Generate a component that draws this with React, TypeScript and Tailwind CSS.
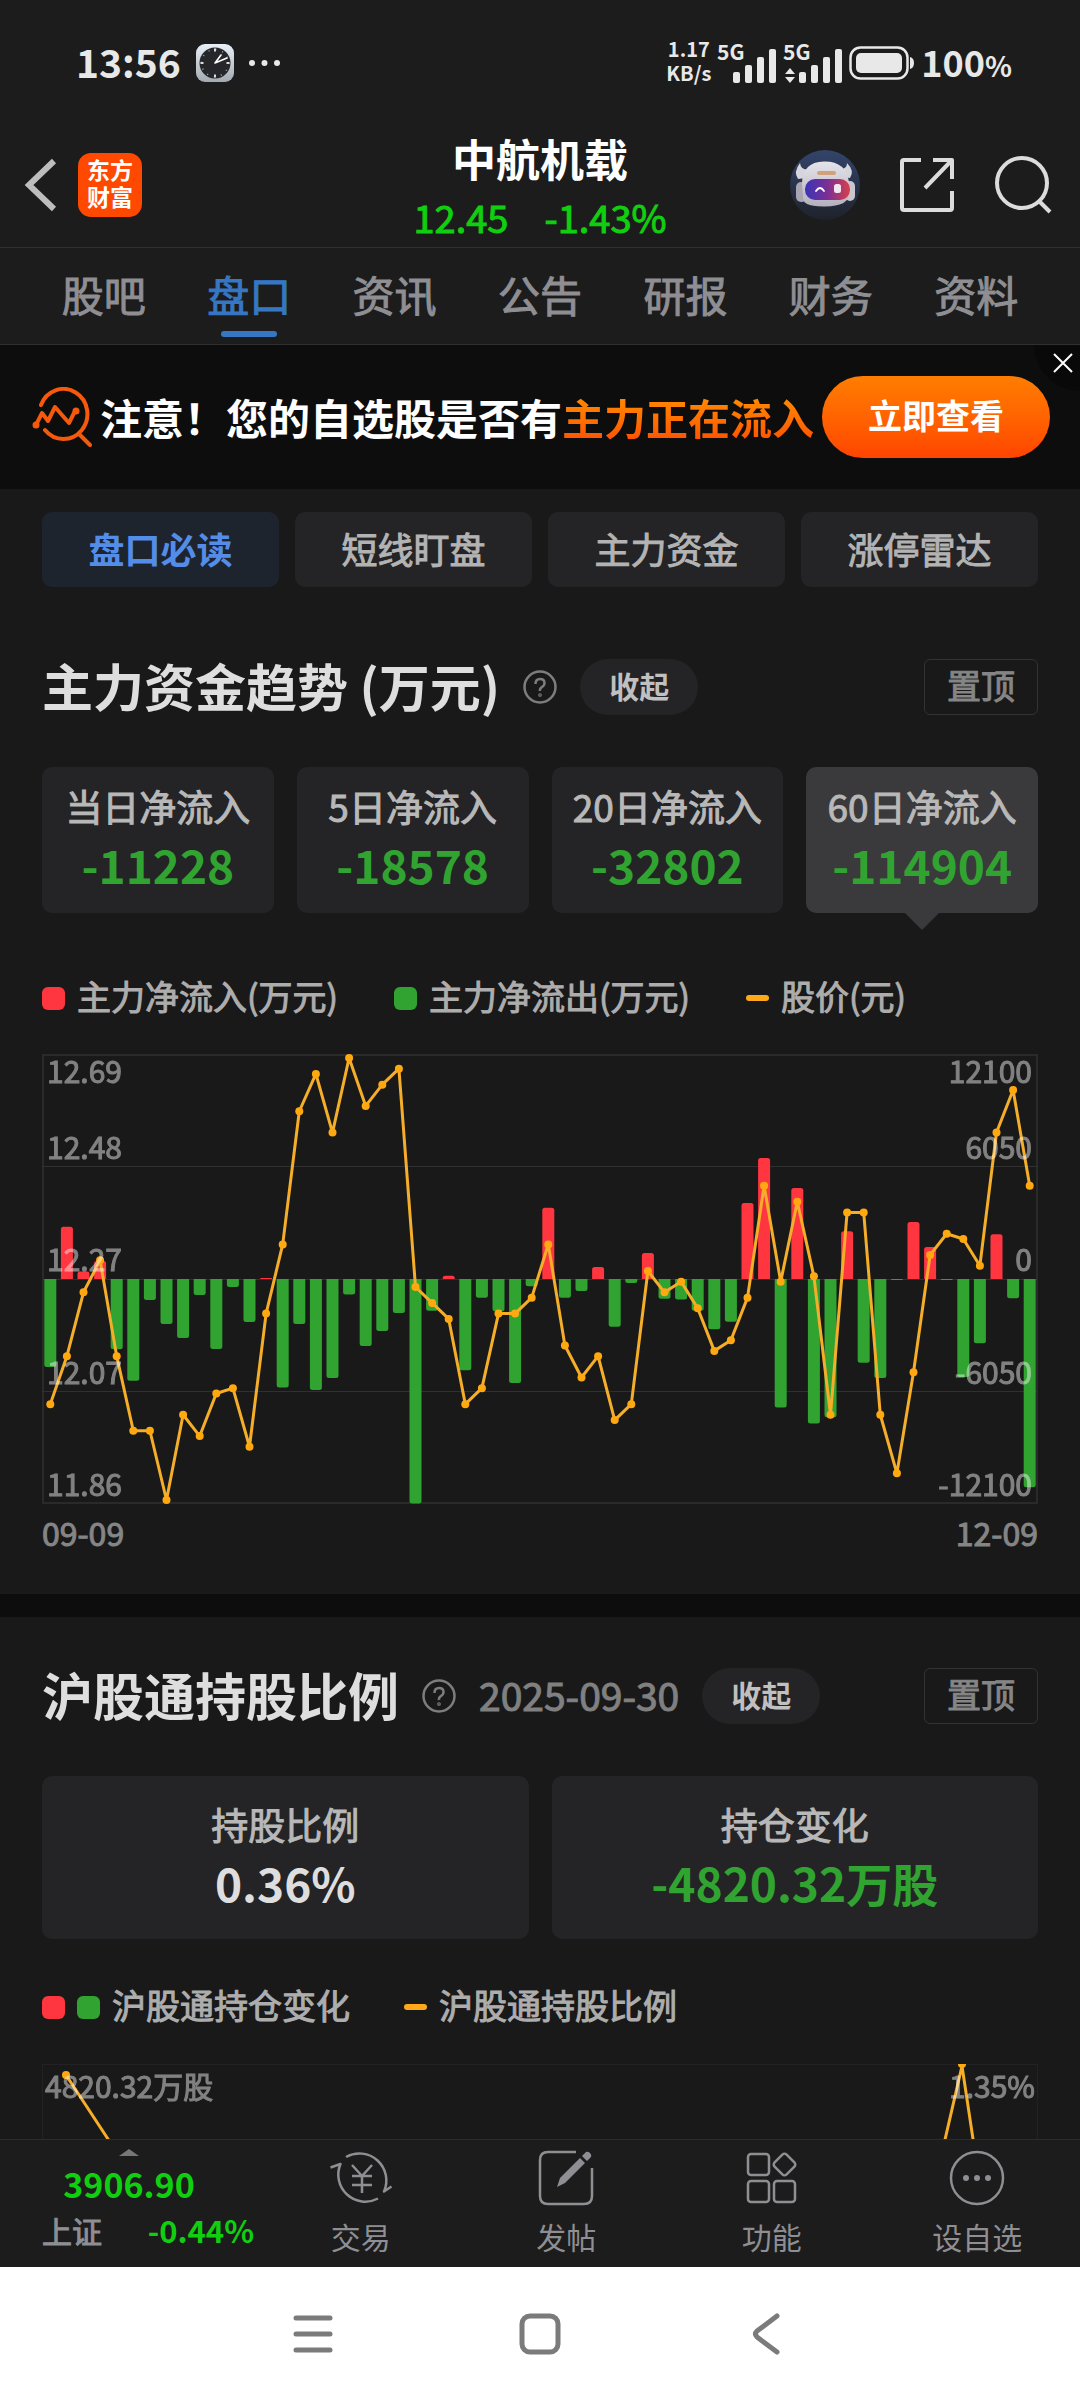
import React from 'react';
import { clsx } from 'clsx';

const TABS = ['股吧', '盘口', '资讯', '公告', '研报', '财务', '资料'];
const CHIPS = ['盘口必读', '短线盯盘', '主力资金', '涨停雷达'];

const FLOW_CARDS = [
  { label: '当日净流入', value: '-11228' },
  { label: '5日净流入', value: '-18578' },
  { label: '20日净流入', value: '-32802' },
  { label: '60日净流入', value: '-114904' },
];

// 主力净流入 (万元), one entry per trading day
const FLOWS = [
  -4740, 2820, 410, 970, -3790, -5490, -1130, -2420, -3180, -860, -3770, -430,
  -2320, 40, -5850, -2420, -5980, -5330, -840, -3610, -2800, -1830, -12100, -1710,
  180, -4920, -1010, -1740, -5600, -390, 3840, -1010, -650, 650, -2570, -220,
  1400, -1060, -1110, -1710, -2710, -2300, 4090, 6520, -6930, 4900, -7790, -7450,
  2580, -4520, -5330, -60, 3070, 1720, -60, -5280, -3460, 2410, -1040, -11228,
];

// 股价 (元)
const PRICES = [
  12.04, 12.13, 12.25, 12.31, 12.13, 11.99, 11.99, 11.86, 12.02, 11.98, 12.06, 12.07,
  11.96, 12.21, 12.34, 12.59, 12.66, 12.55, 12.69, 12.6, 12.64, 12.67, 12.26, 12.23,
  12.2, 12.04, 12.07, 12.21, 12.21, 12.24, 12.34, 12.15, 12.09, 12.13, 12.01, 12.04,
  12.29, 12.25, 12.27, 12.22, 12.14, 12.16, 12.24, 12.45, 12.27, 12.42, 12.28, 12.02,
  12.4, 12.4, 12.02, 11.91, 12.1, 12.32, 12.36, 12.35, 12.3, 12.55, 12.63, 12.45,
];

const PRICE_TICKS = ['12.69', '12.48', '12.27', '12.07', '11.86'];
const FLOW_TICKS = ['12100', '6050', '0', '-6050', '-12100'];
const TICK_Y = [29, 105, 217, 330, 442];

// The CJK face ships regular and bold only, a thin outline gives the weight between
const MEDIUM = 'font-normal [-webkit-text-stroke:1px]';

const STEP = 996 / 60;
const ZERO = 225;
const px = (i: number) => STEP / 2 + i * STEP;
const priceY = (p: number) => 4 + (12.69 - p) * 532.5;

function barPath(i: number, v: number) {
  const h = Math.max((Math.abs(v) / 12100) * 224.5, 1);
  const r = Math.min(2.5, h);
  const s = v > 0 ? -1 : 1;
  const l = px(i) - 6;
  return `M${l} ${ZERO}v${s * (h - r)}q0 ${s * r} ${r} ${s * r}h${12 - 2 * r}q${r} 0 ${r} ${-s * r}v${-s * (h - r)}z`;
}

function Signal({ data }: { data?: boolean }) {
  return (
    <svg viewBox="0 -8 60 56" className="h-[56px] w-[60px]" fill="#e8e8e8">
      <text x="0" y="17" fontSize="21" fontWeight="700">5G</text>
      <rect x="16" y="29" width="7" height="11" rx="2" />
      <rect x="28" y="22" width="7" height="18" rx="2" />
      <rect x="40" y="14" width="7" height="26" rx="2" />
      <rect x="52" y="6" width="7" height="34" rx="2" />
      {data && <path d="M7 25l5 6H2zM7 40l5-6H2z" />}
    </svg>
  );
}

function StatusBar() {
  return (
    <div className="flex h-[126px] items-center justify-between pr-[68px] pl-[76px] text-[#e8e8e8]">
      <div className="flex items-center gap-[15px]">
        <span className="pb-1 text-[39px] leading-[48px] font-bold">13:56</span>
        <svg viewBox="0 0 38 38" className="size-[38px]">
          <defs>
            <linearGradient id="clock" x1="0" y1="0" x2="0" y2="1">
              <stop offset="0" stopColor="#e9f0f8" />
              <stop offset="1" stopColor="#a3a9b0" />
            </linearGradient>
          </defs>
          <rect width="38" height="38" rx="9" fill="url(#clock)" />
          <circle cx="19" cy="19" r="15.5" fill="#26272b" />
          <circle cx="19" cy="19" r="13.5" fill="none" stroke="#a8a8a8" strokeWidth="1.5" strokeDasharray="1 6.07" />
          <path d="M19 4.5v3M19 30.5v3M4.5 19h3M30.5 19h3" stroke="#ddd" strokeWidth="2" />
          <path d="M19 19l6-8M19 19l12-5" stroke="#fff" strokeWidth="1.6" strokeLinecap="round" />
        </svg>
        <svg viewBox="0 0 32 8" className="h-2 w-8" fill="#e8e8e8">
          <circle cx="3" cy="4" r="3" />
          <circle cx="15.5" cy="4" r="3" />
          <circle cx="28" cy="4" r="3" />
        </svg>
      </div>
      <div className="flex items-center gap-[6px]">
        <p className="pb-1 text-center text-[20px] leading-[24px] font-bold">
          1.17
          <br />
          KB/s
        </p>
        <Signal />
        <Signal data />
        <svg viewBox="0 0 66 36" className="h-[36px] w-[66px]">
          <rect x="1.5" y="2.5" width="57" height="31" rx="10" fill="none" stroke="#e8e8e8" strokeWidth="2.5" />
          <rect x="7" y="8" width="46" height="20" rx="5" fill="#e8e8e8" />
          <path d="M61 12q4 1 4 6t-4 6z" fill="#e8e8e8" />
        </svg>
        <span className="text-[36px] leading-[48px] font-bold">
          100<span className="text-[28px]">%</span>
        </span>
      </div>
    </div>
  );
}

function Robot() {
  return (
    <svg viewBox="0 0 70 70" className="size-[70px]">
      <defs>
        <linearGradient id="robotBg" x1="0" y1="0" x2="0" y2="1">
          <stop offset="0" stopColor="#33456b" />
          <stop offset="1" stopColor="#1f222b" />
        </linearGradient>
        <linearGradient id="visor" x1="0" y1="0" x2="1" y2="0">
          <stop offset="0" stopColor="#3a35b5" />
          <stop offset="0.5" stopColor="#7b2f96" />
          <stop offset="1" stopColor="#d8404a" />
        </linearGradient>
        <linearGradient id="shell" x1="0" y1="0" x2="0" y2="1">
          <stop offset="0" stopColor="#e6e4ea" />
          <stop offset="1" stopColor="#b4b0bd" />
        </linearGradient>
      </defs>
      <circle cx="35" cy="35" r="35" fill="url(#robotBg)" />
      <path d="M10 13q-7 9-2 16l8-1 4-9q-9 2-10-6zM57 13q8 8 3 15l-7-1-5-8q9 1 9-6z" fill="#d6d4dc" />
      <rect x="6" y="32" width="11" height="20" rx="5" fill="#a9a5b3" />
      <rect x="55" y="31" width="10" height="20" rx="5" fill="#c9c6d0" />
      <path d="M12 34Q12 12 34 11.5T59 32v12q0 12-24 12.5T13 46z" fill="url(#shell)" />
      <rect x="15" y="29" width="45" height="21" rx="10" fill="url(#visor)" />
      <rect x="27" y="21" width="19" height="4" rx="2" fill="#cfa27c" />
      <path d="M26 41q4-6 8 0" fill="none" stroke="#fff" strokeWidth="1.8" strokeLinecap="round" />
      <rect x="44" y="34" width="7" height="9" rx="2.5" fill="#f4e6f0" />
    </svg>
  );
}

function TitleBar() {
  return (
    <header className="grid h-[122px] grid-cols-3 items-center border-b border-[#303030] px-6">
      <div className="flex items-center gap-5 pb-1">
        <button type="button" aria-label="返回">
          <svg viewBox="0 0 34 54" className="h-[54px] w-[34px]" fill="none" stroke="#bdbdbd" strokeWidth="6">
            <path d="M30 3L5 27l25 24" />
          </svg>
        </button>
        <span className="flex size-16 items-center justify-center rounded-[13px] bg-[#ff4800] pb-1 text-[23px] leading-[27px] font-bold text-white">
          东方
          <br />
          财富
        </span>
      </div>
      <div className="pt-1 text-center">
        <h1 className="mb-2 text-[44px] leading-[48px] font-bold text-white">中航机载</h1>
        <p className={clsx('flex justify-center gap-9 text-[38px] leading-[54px] whitespace-nowrap text-[#10cf10]', MEDIUM)}>
          <span>12.45</span>
          <span>-1.43%</span>
        </p>
      </div>
      <div className="flex items-center justify-end gap-[39px] pr-1 pb-1">
        <button type="button" aria-label="智能助手">
          <Robot />
        </button>
        <button type="button" aria-label="分享">
          <svg viewBox="0 0 56 56" className="size-14" fill="none" stroke="#dcdcdc" strokeWidth="4" strokeLinejoin="round">
            <path d="M22 3H5q-2 0-2 2v46q0 2 2 2h46q2 0 2-2V34M34 3h19v19M53 3L26 31" />
          </svg>
        </button>
        <button type="button" aria-label="搜索">
          <svg viewBox="0 0 58 58" className="size-[58px]" fill="none" stroke="#dcdcdc" strokeWidth="4">
            <circle cx="28" cy="27" r="25" />
            <path d="M44 44l12 12" />
          </svg>
        </button>
      </div>
    </header>
  );
}

function Tabs() {
  return (
    <nav className="flex h-[97px] border-b border-[#303030] px-[31px]">
      {TABS.map((t) => (
        <a
          key={t}
          href="#"
          className={clsx(
            'relative flex flex-1 items-center justify-center pb-1 text-[42px] leading-[48px]',
            MEDIUM,
            t === '盘口' ? 'text-[#3677c4]' : 'text-[#8e8e93]'
          )}
        >
          {t}
          {t === '盘口' && <span className="absolute bottom-[7px] h-[6px] w-14 rounded-full bg-[#3677c4]" />}
        </a>
      ))}
    </nav>
  );
}

function Banner() {
  return (
    <div className="relative flex h-36 items-center justify-between bg-[#0d0d0d] pr-[30px] pl-8">
      <div className="flex items-center gap-2">
        <svg viewBox="0 0 60 60" className="size-[60px]" fill="none" stroke="#f4590c" strokeWidth="4" strokeLinecap="round" strokeLinejoin="round">
          <path d="M9 18a24 25 0 1 1 4 25M47 47l11 11M4 38l6-12 6 8 7-14 14 16 6-12" />
          <circle cx="4" cy="38" r="1.5" />
          <circle cx="44" cy="24" r="1.5" />
        </svg>
        <p className="text-[42px] leading-[48px] font-bold whitespace-nowrap text-white">
          注意！您的自选股是否有
          <span className="bg-linear-to-b from-[#ff9500] to-[#ff4800] bg-clip-text text-transparent">主力正在流入</span>
        </p>
      </div>
      <button type="button" className="h-[82px] w-[228px] rounded-full bg-linear-to-b from-[#ff7d00] to-[#ff4400] pb-1 text-[34px] leading-[48px] font-bold text-white">
        立即查看
      </button>
      <button type="button" aria-label="关闭" className="absolute top-0 right-0 flex size-[46px] items-center justify-end rounded-bl-full bg-black/25 pr-[7px] pb-[11px]">
        <svg viewBox="0 0 20 20" className="size-5" stroke="#fff" strokeWidth="2">
          <path d="M1 1l18 18M19 1L1 19" />
        </svg>
      </button>
    </div>
  );
}

function SectionHeader({ title, date }: { title: string; date?: string }) {
  return (
    <div className="flex h-14 items-center justify-between">
      <div className="flex items-center gap-[23px] whitespace-nowrap">
        <h2 className="pb-1 text-[51px] leading-[56px] font-bold text-[#dedede]">{title}</h2>
        <button type="button" aria-label="说明">
          <svg viewBox="0 0 34 34" className="size-[34px]" fill="none" stroke="#7d7d7d" strokeWidth="2.5">
            <circle cx="17" cy="17" r="15.5" />
            <path d="M12.5 14q0-5 4.5-5t4.5 4q0 2.5-2.5 4t-2 4" />
            <circle cx="17" cy="25" r="0.6" />
          </svg>
        </button>
        {date && <time className={clsx('pb-1 text-[39px] leading-[52px] text-[#808080]', MEDIUM)}>{date}</time>}
        <button type="button" className="h-14 w-[118px] rounded-full bg-[#242426] pb-1 text-[30px] leading-[48px] font-bold text-[#c0c0c0]">
          收起
        </button>
      </div>
      <button type="button" className={clsx('h-14 w-[114px] rounded-[6px] border border-[#333] pb-1 text-[34px] leading-[48px] text-[#858585]', MEDIUM)}>
        置顶
      </button>
    </div>
  );
}

function LegendItem({ label, marks }: { label: string; marks: string[] }) {
  return (
    <div className="flex items-center gap-3">
      {marks.map((m) => (
        <span
          key={m}
          className={clsx(
            'w-[23px]',
            m === 'in' && 'h-[23px] rounded-[6px] bg-[#ff3640]',
            m === 'out' && 'h-[23px] rounded-[6px] bg-[#31a331]',
            m === 'line' && 'h-[6px] rounded-full bg-[#ffa81a]'
          )}
        />
      ))}
      <span className={clsx('-mt-1 text-[34px] leading-[48px] text-[#adadad]', MEDIUM)}>{label}</span>
    </div>
  );
}

function FlowChart() {
  const line = PRICES.map((p, i) => `${px(i)},${priceY(p)}`).join(' ');
  return (
    <svg viewBox="0 0 996 450" className="mt-8 h-auto w-full overflow-visible">
      <g fill="none" stroke="#2a2a2b">
        <rect x="1" y="1" width="994" height="448" strokeWidth="2" />
        <path d="M0 112.5h996M0 225.5h996M0 337.5h996" stroke="#303031" />
      </g>
      {FLOWS.map((v, i) => (
        <path key={i} d={barPath(i, v)} fill={v > 0 ? '#ff3640' : '#31a331'} />
      ))}
      <polyline points={line} fill="none" stroke="#f5ae2a" strokeWidth="3" strokeLinejoin="round" />
      {PRICES.map((p, i) => (
        <circle key={i} cx={px(i)} cy={priceY(p)} r="4" fill="#ffa80f" />
      ))}
      <g fill="#fff" stroke="#fff" opacity="0.45" fontSize="30">
        {TICK_Y.map((y, i) => (
          <React.Fragment key={y}>
            <text x="5" y={y}>{PRICE_TICKS[i]}</text>
            <text x="990" y={y} textAnchor="end">{FLOW_TICKS[i]}</text>
          </React.Fragment>
        ))}
      </g>
    </svg>
  );
}

function HoldingChart() {
  return (
    <svg viewBox="0 0 996 450" className="mt-[33px] h-auto w-full overflow-visible">
      <rect x="0.5" y="0.5" width="995" height="449" fill="none" stroke="#222224" />
      <polyline
        points="24,11 66,75 130,172 480,300 820,435 920,2 980,400"
        fill="none"
        stroke="#f5ae2a"
        strokeWidth="3"
        strokeLinejoin="round"
      />
      <circle cx="24" cy="11" r="4" fill="#ffa80f" />
      <path d="M916 0h8a4 4 0 0 1-8 0z" fill="#ffa80f" />
      <g fill="#fff" stroke="#fff" opacity="0.45" fontSize="30">
        <text x="3" y="34">4820.32万股</text>
        <text x="993" y="34" textAnchor="end">1.35%</text>
      </g>
    </svg>
  );
}

function BottomItem({ label, children }: { label: string; children: React.ReactNode }) {
  return (
    <a href="#" className="flex flex-1 flex-col items-center gap-[6px] pt-2 text-[30px] leading-[44px] text-[#8e8e93]">
      <svg viewBox="0 0 60 60" className="size-[60px] overflow-visible" fill="none" stroke="#8e8e93" strokeWidth="2.5">
        {children}
      </svg>
      {label}
    </a>
  );
}

function BottomBar() {
  return (
    <nav className="flex h-32 shrink-0 border-t border-[#2b2b2b] bg-[#1c1c1c]">
      <a href="#" className="flex w-[258px] flex-col items-center pt-[9px] font-bold text-[#10cf10]">
        <svg viewBox="0 0 20 7" className="h-[7px] w-5" fill="#77777b">
          <path d="M10 0l10 7H0z" />
        </svg>
        <span className="mt-1 text-[34px] leading-[48px]">3906.90</span>
        <span className="flex w-full items-center justify-between pr-1 pl-[42px]">
          <span className={clsx('text-[30px] leading-[44px] text-[#8e8e93]', MEDIUM)}>上证</span>
          <span className="text-[31px] leading-[44px]">-0.44%</span>
        </span>
      </a>
      <BottomItem label="交易">
        <path d="M15 9A27 27 0 0 1 53 43.5l7.5-5M47 50.5A27 27 0 0 1 9.5 16l-10 3.5" strokeLinejoin="round" />
        <path d="M21 17l10 11 10-11M31 28v17M21 28h20M21 37h20" />
      </BottomItem>
      <BottomItem label="发帖">
        <path d="M40 4H12q-8 0-8 8v36q0 8 8 8h36q8 0 8-8V20" />
        <path d="M21 39l3-9 20-20 5 5-20 20zM46 8l4-4q2-1 4 1t1 4l-4 4z" fill="#8e8e93" stroke="none" />
      </BottomItem>
      <BottomItem label="功能">
        <rect x="6" y="6" width="21" height="21" rx="3" />
        <rect x="6" y="33" width="21" height="21" rx="3" />
        <rect x="32" y="33" width="21" height="21" rx="3" />
        <rect x="34" y="8" width="17" height="17" rx="3" transform="rotate(45 42.5 16.5)" />
      </BottomItem>
      <BottomItem label="设自选">
        <circle cx="30" cy="30" r="26" />
        <g fill="#8e8e93" stroke="none">
          <circle cx="19" cy="30" r="3" />
          <circle cx="30" cy="30" r="3" />
          <circle cx="41" cy="30" r="3" />
        </g>
      </BottomItem>
    </nav>
  );
}

function SystemNav() {
  return (
    <div className="grid h-[133px] shrink-0 grid-cols-3 place-items-center bg-white px-[200px]">
      <button type="button" aria-label="最近任务">
        <svg viewBox="0 0 42 42" className="size-[42px]" stroke="#7b7b7b" strokeWidth="5" strokeLinecap="round">
          <path d="M4 5h34M4 21h34M4 37h34" />
        </svg>
      </button>
      <button type="button" aria-label="主屏幕">
        <svg viewBox="0 0 42 42" className="size-[42px]" fill="none" stroke="#7b7b7b" strokeWidth="5">
          <rect x="3" y="3" width="36" height="36" rx="8" />
        </svg>
      </button>
      <button type="button" aria-label="返回">
        <svg viewBox="0 0 42 42" className="size-[42px]" fill="none" stroke="#7b7b7b" strokeWidth="5" strokeLinecap="round" strokeLinejoin="round">
          <path d="M31 3L11 18q-3 3 0 6l20 15" />
        </svg>
      </button>
    </div>
  );
}

export default function App() {
  return (
    <div className="flex h-screen flex-col bg-[#19191a] font-['Noto_Sans_CJK_SC',sans-serif]">
      <div className="shrink-0 bg-[#1c1c1c]">
        <StatusBar />
        <TitleBar />
        <Tabs />
      </div>

      <main className="min-h-0 flex-1 overflow-hidden">
        <Banner />

        <section className="px-[42px] pt-[23px] pb-[41px]">
          <div className="grid grid-cols-4 gap-4">
            {CHIPS.map((c, i) => (
              <button
                key={c}
                type="button"
                className={clsx(
                  'h-[75px] rounded-[10px] pb-1 text-[36px] leading-[48px]',
                  i === 0 ? 'bg-[#1e242e] font-bold text-[#548de8]' : 'bg-[#242426] text-[#b3b3b3]',
                  i > 0 && MEDIUM
                )}
              >
                {c}
              </button>
            ))}
          </div>

          <div className="mt-[72px]">
            <SectionHeader title="主力资金趋势 (万元)" />
          </div>

          <div className="mt-[52px] grid grid-cols-4 gap-[23px]">
            {FLOW_CARDS.map((c, i) => (
              <button
                key={c.label}
                type="button"
                className={clsx(
                  'relative flex h-[146px] flex-col items-center justify-center rounded-[10px] pb-2 whitespace-nowrap',
                  i === 3 ? 'bg-[#3a3a3c]' : 'bg-[#242426]'
                )}
              >
                <span className={clsx('text-[37px] leading-[56px] text-[#b8b8b8]', MEDIUM)}>{c.label}</span>
                <span className="text-[46px] leading-[60px] font-bold text-[#31a331]">{c.value}</span>
                {i === 3 && (
                  <svg viewBox="0 0 34 17" className="absolute top-full h-[17px] w-[34px]" fill="#3a3a3c">
                    <path d="M0 0h34L17 17z" />
                  </svg>
                )}
              </button>
            ))}
          </div>

          <div className="mt-[61px] flex h-12 items-center gap-14 whitespace-nowrap">
            <LegendItem marks={['in']} label="主力净流入(万元)" />
            <LegendItem marks={['out']} label="主力净流出(万元)" />
            <LegendItem marks={['line']} label="股价(元)" />
          </div>

          <FlowChart />
          <div className={clsx('mt-2 flex justify-between text-[32px] leading-[41px] text-[#858585]', MEDIUM)}>
            <span>09-09</span>
            <span>12-09</span>
          </div>
        </section>

        <section className="border-t-[23px] border-[#0d0d0d] px-[42px] pt-[51px]">
          <SectionHeader title="沪股通持股比例" date="2025-09-30" />

          <div className="mt-[52px] grid grid-cols-2 gap-[23px] text-center">
            <div className="flex h-[163px] flex-col justify-center rounded-[10px] bg-[#242426] pb-2">
              <p className={clsx('text-[37px] leading-[56px] text-[#b8b8b8]', MEDIUM)}>持股比例</p>
              <p className="text-[46px] leading-[60px] font-bold text-[#dedede]">0.36%</p>
            </div>
            <div className="flex h-[163px] flex-col justify-center rounded-[10px] bg-[#242426] pb-2">
              <p className={clsx('text-[37px] leading-[56px] text-[#b8b8b8]', MEDIUM)}>持仓变化</p>
              <p className="text-[46px] leading-[60px] font-bold text-[#31a331]">-4820.32万股</p>
            </div>
          </div>

          <div className="mt-11 flex h-12 items-center gap-[54px] whitespace-nowrap">
            <LegendItem marks={['in', 'out']} label="沪股通持仓变化" />
            <LegendItem marks={['line']} label="沪股通持股比例" />
          </div>

          <HoldingChart />
        </section>
      </main>

      <BottomBar />
      <SystemNav />
    </div>
  );
}
